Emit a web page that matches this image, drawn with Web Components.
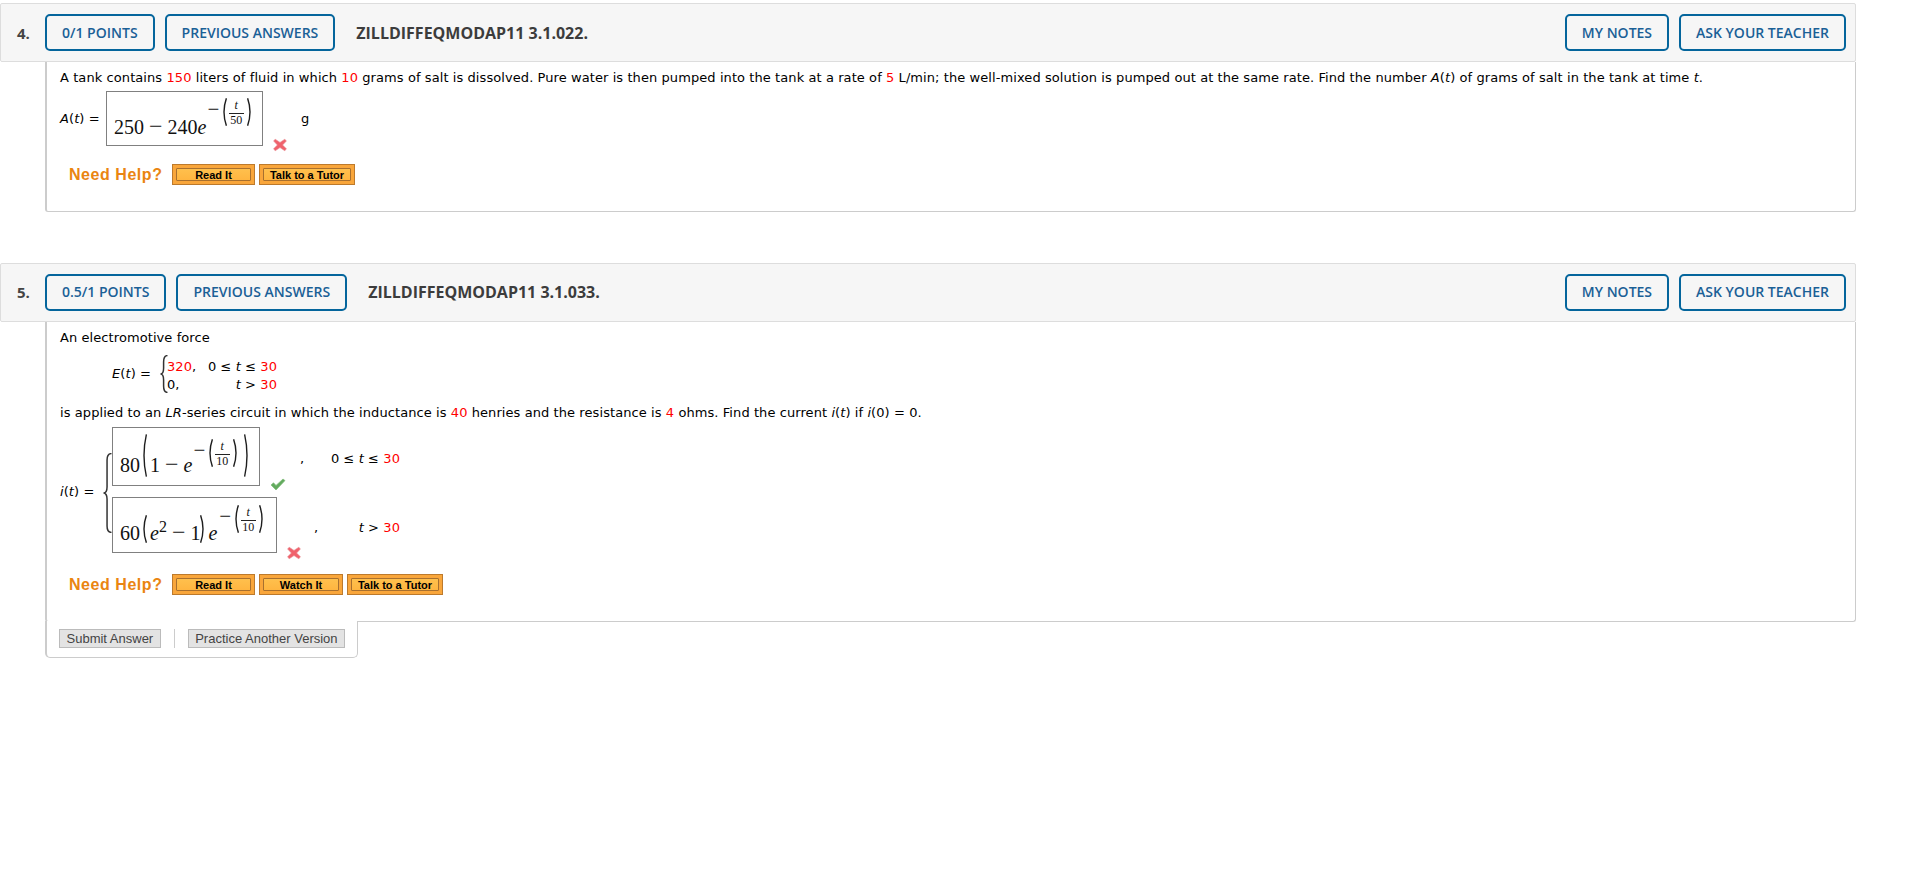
<!DOCTYPE html>
<html lang="en"><head><meta charset="utf-8"><title>Questions</title>
<style>
html,body{margin:0;padding:0;background:#fff}
body{font:13px/18px "DejaVu Sans",Verdana,sans-serif;color:#000;padding-top:3px;height:869px;overflow:hidden;letter-spacing:.08px}
b.r{color:#f00;font-weight:normal}
p{margin:0}
i{font-style:italic}
.mm{font-size:24px;line-height:0}
</style></head><body>
<script>
function def(name,css,html){
  customElements.define(name,class extends HTMLElement{
    constructor(){super();this.attachShadow({mode:'open'});}
    connectedCallback(){if(this.shadowRoot.firstChild)return;this.shadowRoot.innerHTML='<style>'+css+'</style>'+(typeof html==='function'?html(this):html);}
  });
}
def('wv-btn',`:host{display:inline-flex;align-items:center;box-sizing:border-box;height:37px;padding:0 15px var(--up,0);border:2.4px solid #04659c;border-radius:5px;font:600 14px "Open Sans",sans-serif;color:#1a6096;white-space:nowrap}`,'<slot></slot>');
def('wv-question',`:host{display:block;width:1856px;margin-bottom:51px}
header{display:flex;align-items:center;box-sizing:border-box;height:59px;background:#f6f6f6;border:1px solid #ddd;border-radius:2px;padding:0 9px 0 16px;letter-spacing:0}
.n{width:28px;font:700 15px "Open Sans",sans-serif;color:#444;padding-bottom:var(--up,0)}
.pts{display:flex;gap:10px}
.code{margin-left:21px;font:700 16px "Open Sans",sans-serif;color:#3c3c3c;padding-bottom:var(--up,0)}
.side{margin-left:auto;display:flex;gap:10px}
.b{margin-left:45px;box-sizing:border-box;border:solid #ccc;border-width:0 1px 1px 2px;border-radius:0 0 3px 3px;padding:7px 0 26px 13px}`,
h=>`<header><span class="n">${h.getAttribute('num')}</span><span class="pts"><wv-btn>${h.getAttribute('pts')}</wv-btn><wv-btn>PREVIOUS ANSWERS</wv-btn></span><span class="code">${h.getAttribute('code')}</span><span class="side"><wv-btn>MY NOTES</wv-btn><wv-btn>ASK YOUR TEACHER</wv-btn></span></header><div class="b"><slot></slot></div>`);
def('wv-help',`:host{display:flex;align-items:center;padding-left:9px;gap:4px;letter-spacing:0}
.t{font:700 16px/21px "Liberation Sans",Arial,sans-serif;color:#ea8511;margin-right:6px;width:93px;white-space:nowrap;letter-spacing:.55px}`,'<span class="t">Need Help?</span><slot></slot>');
def('wv-help-btn',`:host{display:inline-flex;box-sizing:border-box;height:21px;border:1px solid #bd7a2c;background:#f9a63b;padding:3px}
span{flex:1;display:flex;align-items:center;justify-content:center;border:1px solid #a8702f;background:linear-gradient(#ffc04d,#ffb540);border-radius:1px;font:700 11px "Liberation Sans",Arial,sans-serif;color:#000;white-space:nowrap}`,'<span><slot></slot></span>');
def('wv-box',`:host{display:flex;align-items:flex-end;box-sizing:border-box;border:1px solid #808080;padding-left:7px;background:#fff;font:20px/20px "Liberation Serif","Times New Roman",serif;color:#111;flex:none;letter-spacing:0}`,'<slot></slot>');
def('m-paren',`:host{display:block;flex:none;line-height:0}svg{display:block}`,
h=>{const H=+h.getAttribute('h'),r=h.hasAttribute('r'),w=+(h.getAttribute('w')||6);const d=r?`M0.6 0.3Q${w-0.6} ${H/2} 0.6 ${H-0.3}`:`M${w-0.6} 0.3Q0.6 ${H/2} ${w-0.6} ${H-0.3}`;return `<svg width="${w}" height="${H}" viewBox="0 0 ${w} ${H}"><path d="${d}" fill="none" stroke="#1d1d1d" stroke-width="1.4"/></svg>`;});
def('m-exp',`:host{display:flex;align-items:center;align-self:flex-start;flex:none;font:15px/28px "Liberation Serif",serif;height:28px;color:#111}
.mn{margin:-7px 2px 0 1px;font-size:21px}
.f{display:flex;flex-direction:column;align-items:center;margin:0 3.5px 0 1.5px;font-size:12px;line-height:13px}
.f i{display:block;border-bottom:1px solid #222;width:15px;text-align:center;font-size:12px;height:15px;line-height:14px}
.f span{display:block}`,
h=>`<span class="mn">−</span><m-paren h="28"></m-paren><span class="f"><i>t</i><span>${h.getAttribute('den')}</span></span><m-paren h="28" r></m-paren>`);
def('m-brace',`:host{display:block;flex:none;line-height:0}svg{display:block}`,
h=>{const H=+h.getAttribute('h'),W=+h.getAttribute('w'),m=W*0.45,c=H/2;return `<svg width="${W}" height="${H}" viewBox="0 0 ${W} ${H}"><path d="M${W-.5} .6C${m+1} .6 ${m} 3 ${m} 7V${c-6}C${m} ${c-2} ${m-1.5} ${c} .5 ${c}C${m-1.5} ${c} ${m} ${c+2} ${m} ${c+6}V${H-7}C${m} ${H-3} ${m+1} ${H-.6} ${W-.5} ${H-.6}" fill="none" stroke="#333" stroke-width="1.5"/></svg>`;});
def('m-x',`:host{display:block;flex:none;line-height:0}`,'<svg width="14" height="14" viewBox="0 0 14 14"><path d="M2.2 1.2 7 4.4l4.8-3.2 1.6 1.8L9.6 7l3.8 3.8-1.6 2L7 9.6l-4.8 3.2-1.6-2L4.4 7 .6 3z" fill="#f0626c" stroke="#e88a90" stroke-width=".6" stroke-linejoin="round"/></svg>');
def('m-check',`:host{display:block;flex:none;line-height:0}`,'<svg width="16" height="13" viewBox="0 0 16 13"><path d="M1 7 3.5 4.8 6 7.4 13 1l2 1.6L6 12z" fill="#62aa5e" stroke="#7fbb78" stroke-width=".7" stroke-linejoin="round"/></svg>');
def('wv-row',`:host{display:flex;flex:none}`,'<slot></slot>');
def('wv-actions',`:host{display:flex;align-items:center;box-sizing:border-box;width:313px;height:37px;margin:-1px 0 0 45px;background:#fff;position:relative;border:solid #ccc;border-width:0 1px 1px 2px;border-radius:0 0 5px 5px;padding:0 0 2px 12px;font:13px "Liberation Sans",Arial,sans-serif;color:#444;letter-spacing:0}
.s{width:1px;height:19px;background:#ccc;margin:0 13px 0 13px}`,'<slot name="a"></slot><span class="s"></span><slot name="b"></slot>');
def('wv-grey-btn',`:host{display:inline-flex;align-items:center;box-sizing:border-box;height:19px;padding:0 6.5px;background:#e3e3e3;border:1px solid #bbb;white-space:nowrap}`,'<slot></slot>');
</script>

<wv-question num="4." pts="0/1 POINTS" code="ZILLDIFFEQMODAP11 3.1.022.">
  <p>A tank contains <b class="r">150</b> liters of fluid in which <b class="r">10</b> grams of salt is dissolved. Pure water is then pumped into the tank at a rate of <b class="r">5</b> L/min; the well-mixed solution is pumped out at the same rate. Find the number <i>A</i>(<i>t</i>) of grams of salt in the tank at time <i>t</i>.</p>
  <wv-row style="margin-top:4px;align-items:flex-start">
    <span style="width:46px;line-height:18px;margin-top:19px;white-space:nowrap"><i>A</i>(<i>t</i>) =</span>
    <wv-box style="width:157px;height:55px">
      <span style="margin-bottom:8px;white-space:pre">250 <span class="mm">−</span> 240<i>e</i></span>
      <m-exp den="50" style="margin-top:6px"></m-exp>
    </wv-box>
    <m-x style="margin:47px -7px -6px 10px"></m-x>
    <span style="margin:19px 0 0 21px">g</span>
  </wv-row>
  <wv-help style="margin-top:18px">
    <wv-help-btn style="width:83px">Read It</wv-help-btn>
    <wv-help-btn style="width:96px">Talk to a Tutor</wv-help-btn>
  </wv-help>
</wv-question>

<wv-question num="5." pts="0.5/1 POINTS" code="ZILLDIFFEQMODAP11 3.1.033." style="margin-bottom:0;--up:2px">
  <p>An electromotive force</p>
  <wv-row style="margin:8px 0 0 52px;align-items:center;height:38px">
    <span style="width:48px;white-space:nowrap"><i>E</i>(<i>t</i>) =</span>
    <m-brace w="8" h="38"></m-brace>
    <span style="display:grid;grid-template-columns:41px 69px;line-height:18px;margin:3px 0 0 -1px">
      <span><b class="r">320</b>,</span><span style="white-space:nowrap">0 ≤ <i>t</i> ≤ <b class="r">30</b></span>
      <span>0,</span><span style="text-align:right;white-space:nowrap"><i>t</i> &gt; <b class="r">30</b></span>
    </span>
  </wv-row>
  <p style="margin-top:11px">is applied to an <i>LR</i>-series circuit in which the inductance is <b class="r">40</b> henries and the resistance is <b class="r">4</b> ohms. Find the current <i>i</i>(<i>t</i>) if <i>i</i>(0) = 0.</p>
  <wv-row style="margin-top:5px;align-items:flex-start">
    <span style="width:43px;margin-top:56px;white-space:nowrap"><i>i</i>(<i>t</i>) =</span>
    <m-brace w="9" h="80" style="margin-top:26px"></m-brace>
    <span style="display:flex;flex-direction:column;gap:11px;width:288px">
      <wv-row style="align-items:flex-start">
        <wv-box style="width:148px;height:59px">
          <span style="margin-bottom:10px;white-space:pre;margin-right:1px">80</span>
          <m-paren h="43" style="align-self:flex-start;margin-top:6px"></m-paren>
          <span style="margin:0 0 10px 3px;white-space:pre">1 <span class="mm">−</span> <i>e</i></span>
          <m-exp den="10" style="margin-top:11px"></m-exp>
          <m-paren h="43" r style="align-self:flex-start;margin:6px 0 0 5px"></m-paren>
        </wv-box>
        <m-check style="margin:51px 0 -5px 10px"></m-check>
        <span style="margin:23px 0 0 14px">,</span>
        <span style="margin:23px 0 0 auto;white-space:nowrap">0 ≤ <i>t</i> ≤ <b class="r">30</b></span>
      </wv-row>
      <wv-row style="align-items:flex-start">
        <wv-box style="width:165px;height:56px">
          <span style="margin-bottom:9px;margin-right:1px">60</span>
          <m-paren h="28" style="align-self:flex-start;margin-top:17px"></m-paren>
          <span style="margin:0 0 9px 3px;white-space:pre"><i>e</i><sup style="font-size:16px;line-height:0">2</sup> <span class="mm">−</span> 1</span>
          <m-paren h="28" r style="align-self:flex-start;margin-top:17px"></m-paren>
          <span style="margin:0 0 9px 2px"><i>e</i></span>
          <m-exp den="10" style="margin:7px 0 0 1px"></m-exp>
        </wv-box>
        <m-x style="margin:49px 0 -7px 10px"></m-x>
        <span style="margin:22px 0 0 13px">,</span>
        <span style="margin:22px 0 0 auto;white-space:nowrap"><i>t</i> &gt; <b class="r">30</b></span>
      </wv-row>
    </span>
  </wv-row>
  <wv-help style="margin-top:21px">
    <wv-help-btn style="width:83px">Read It</wv-help-btn>
    <wv-help-btn style="width:84px">Watch It</wv-help-btn>
    <wv-help-btn style="width:96px">Talk to a Tutor</wv-help-btn>
  </wv-help>
</wv-question>
<wv-actions>
  <wv-grey-btn slot="a">Submit Answer</wv-grey-btn>
  <wv-grey-btn slot="b">Practice Another Version</wv-grey-btn>
</wv-actions>
</body></html>
